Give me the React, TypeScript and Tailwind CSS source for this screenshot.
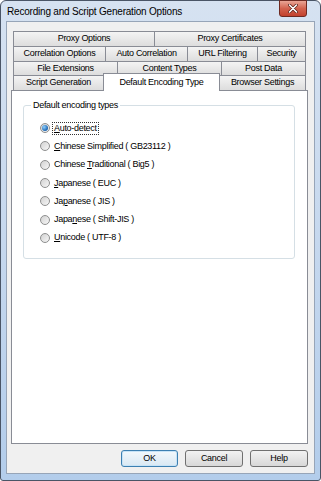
import React from 'react';

const font = { fontFamily: '"Liberation Sans", Arial, sans-serif' };

function Tab({ label, w, last }: { label: string; w: number; last?: boolean }) {
  return (
    <div
      className={`flex h-full items-center justify-center border-t border-l border-[#898c95] bg-linear-to-b from-[#f4f4f4] to-[#dddddd] ${last ? 'border-r' : ''}`}
      style={{ width: w }}
    >
      {label}
    </div>
  );
}

function Radio({ checked }: { checked?: boolean }) {
  return (
    <span className="flex h-[10px] w-[10px] shrink-0 items-center justify-center rounded-full border border-[#8e8f8f] bg-linear-to-br from-[#d2d2d2] to-[#f7f7f7]">
      {checked && (
        <span className="h-[6px] w-[6px] rounded-full bg-[radial-gradient(circle_at_35%_35%,#8fd0ff,#1a64b0_70%)]" />
      )}
    </span>
  );
}

const options: { pre: string; key: string; post: string }[] = [
  { pre: '', key: 'A', post: 'uto-detect' },
  { pre: '', key: 'C', post: 'hinese Simplified ( GB23112 )' },
  { pre: 'Chinese ', key: 'T', post: 'raditional ( Big5 )' },
  { pre: '', key: 'J', post: 'apanese ( EUC )' },
  { pre: 'Ja', key: 'p', post: 'anese ( JIS )' },
  { pre: 'Japa', key: 'n', post: 'ese ( Shift-JIS )' },
  { pre: '', key: 'U', post: 'nicode ( UTF-8 )' },
];

export default function App() {
  return (
    <div
      className="flex h-[481px] w-[321px] flex-col rounded-t-[6px] rounded-b-[3px] border border-[#4a5566] bg-linear-to-b from-[#d6e2f1] via-[#c6d8ee] to-[#b3cdeb] px-[5px] pb-[6px] text-[9px] tracking-[-0.3px] text-black"
      style={font}
    >
      {/* Title bar */}
      <div className="flex h-[20px] shrink-0">
        <div className="flex items-center pl-[1px] text-[10px] tracking-[-0.2px]">
          Recording and Script Generation Options
        </div>
        <div className="-mt-px mr-[8px] ml-auto flex h-[17px] w-[28px] items-center justify-center rounded-b-[3px] border border-[#6e2a22] bg-linear-to-b from-[#e9a596] via-[#d2624e] to-[#c2402c]">
          <svg width="10" height="9" viewBox="0 0 10 9">
            <path d="M1.5 1 L8.5 8 M8.5 1 L1.5 8" stroke="#5a2018" strokeWidth="3" strokeLinecap="round" />
            <path d="M1.5 1 L8.5 8 M8.5 1 L1.5 8" stroke="#ffffff" strokeWidth="1.6" strokeLinecap="round" />
          </svg>
        </div>
      </div>

      {/* Client area */}
      <div className="flex h-[453px] flex-col border border-[#97a5b8] bg-[#f0f0f0]">
        {/* Tabs */}
        <div className="mt-[9px] ml-[6px] flex w-[293px] flex-col">
          <div className="flex h-[15px]">
            <Tab label="Proxy Options" w={141} />
            <Tab label="Proxy Certificates" w={152} last />
          </div>
          <div className="flex h-[15px]">
            <Tab label="Correlation Options" w={92} />
            <Tab label="Auto Correlation" w={82} />
            <Tab label="URL Filtering" w={70} />
            <Tab label="Security" w={49} last />
          </div>
          <div className="flex h-[14px]">
            <Tab label="File Extensions" w={104} />
            <Tab label="Content Types" w={104} />
            <Tab label="Post Data" w={85} last />
          </div>
          <div className="flex h-[15px] items-end">
            <Tab label="Script Generation" w={90} />
            <div className="relative z-10 mb-[-1px] flex h-[18px] w-[117px] items-start justify-center border-x border-t border-[#898c95] bg-white pt-[2px]">
              Default Encoding Type
            </div>
            <div className="flex h-full w-[86px] items-center justify-center border-t border-r border-[#898c95] bg-linear-to-b from-[#f4f4f4] to-[#dddddd]">
              Browser Settings
            </div>
          </div>
        </div>

        {/* Tab page */}
        <div className="ml-[4px] h-[354px] w-[297px] border border-[#898c95] bg-white">
          <fieldset className="mt-[9px] ml-[11px] w-[272px] rounded-[3px] border border-[#d5dfe5] pb-[11px] pl-[16px]">
            <legend className="-ml-[9px] px-[2px] leading-[11px]">Default encoding types</legend>
            <div className="flex flex-col pt-[8px]">
              {options.map((o, i) => (
                <div key={i} className="flex h-[18.3px] items-center">
                  <Radio checked={i === 0} />
                  <span
                    className={`ml-[3px] px-[1px] leading-[11px] ${i === 0 ? 'outline-1 outline-dotted outline-[#333]' : ''}`}
                  >
                    {o.pre}
                    <span className="underline underline-offset-[1px]">{o.key}</span>
                    {o.post}
                  </span>
                </div>
              ))}
            </div>
          </fieldset>
        </div>

        {/* Buttons */}
        <div className="mt-[6px] ml-[114px] flex gap-[7px]">
          <button className="h-[17px] w-[57px] rounded-[3px] border border-[#3c7fb1] bg-linear-to-b from-[#f2f8fc] to-[#d9e8f3] shadow-[inset_0_0_0_1px_#c6e3f7]">
            OK
          </button>
          <button className="h-[17px] w-[58px] rounded-[3px] border border-[#707070] bg-linear-to-b from-[#f2f2f2] to-[#d8d8d8]">
            Cancel
          </button>
          <button className="h-[17px] w-[58px] rounded-[3px] border border-[#707070] bg-linear-to-b from-[#f2f2f2] to-[#d8d8d8]">
            Help
          </button>
        </div>
      </div>
    </div>
  );
}
